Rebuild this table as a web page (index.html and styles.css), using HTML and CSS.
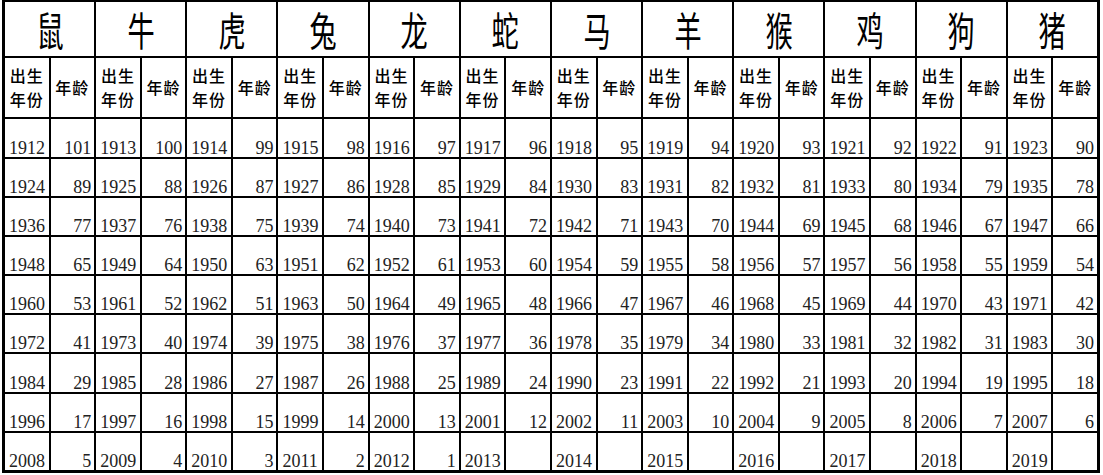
FILE: index.html
```html
<!DOCTYPE html>
<html lang="zh-CN">
<head>
<meta charset="utf-8">
<title>生肖年龄对照表</title>
<link rel="stylesheet" href="styles.css">
</head>
<body>
<div class="sheet">
  <div class="zh"><span>鼠</span></div><div class="zh"><span>牛</span></div><div class="zh"><span>虎</span></div><div class="zh"><span>兔</span></div><div class="zh"><span>龙</span></div><div class="zh"><span>蛇</span></div><div class="zh"><span>马</span></div><div class="zh"><span>羊</span></div><div class="zh"><span>猴</span></div><div class="zh"><span>鸡</span></div><div class="zh"><span>狗</span></div><div class="zh"><span>猪</span></div>

  <div class="sh">出生<br>年份</div><div class="sh">年龄</div><div class="sh">出生<br>年份</div><div class="sh">年龄</div><div class="sh">出生<br>年份</div><div class="sh">年龄</div><div class="sh">出生<br>年份</div><div class="sh">年龄</div><div class="sh">出生<br>年份</div><div class="sh">年龄</div><div class="sh">出生<br>年份</div><div class="sh">年龄</div><div class="sh">出生<br>年份</div><div class="sh">年龄</div><div class="sh">出生<br>年份</div><div class="sh">年龄</div><div class="sh">出生<br>年份</div><div class="sh">年龄</div><div class="sh">出生<br>年份</div><div class="sh">年龄</div><div class="sh">出生<br>年份</div><div class="sh">年龄</div><div class="sh">出生<br>年份</div><div class="sh">年龄</div>

  <div class="y">1912</div><div class="a">101</div><div class="y">1913</div><div class="a">100</div><div class="y">1914</div><div class="a">99</div><div class="y">1915</div><div class="a">98</div><div class="y">1916</div><div class="a">97</div><div class="y">1917</div><div class="a">96</div><div class="y">1918</div><div class="a">95</div><div class="y">1919</div><div class="a">94</div><div class="y">1920</div><div class="a">93</div><div class="y">1921</div><div class="a">92</div><div class="y">1922</div><div class="a">91</div><div class="y">1923</div><div class="a">90</div>

  <div class="y">1924</div><div class="a">89</div><div class="y">1925</div><div class="a">88</div><div class="y">1926</div><div class="a">87</div><div class="y">1927</div><div class="a">86</div><div class="y">1928</div><div class="a">85</div><div class="y">1929</div><div class="a">84</div><div class="y">1930</div><div class="a">83</div><div class="y">1931</div><div class="a">82</div><div class="y">1932</div><div class="a">81</div><div class="y">1933</div><div class="a">80</div><div class="y">1934</div><div class="a">79</div><div class="y">1935</div><div class="a">78</div>

  <div class="y">1936</div><div class="a">77</div><div class="y">1937</div><div class="a">76</div><div class="y">1938</div><div class="a">75</div><div class="y">1939</div><div class="a">74</div><div class="y">1940</div><div class="a">73</div><div class="y">1941</div><div class="a">72</div><div class="y">1942</div><div class="a">71</div><div class="y">1943</div><div class="a">70</div><div class="y">1944</div><div class="a">69</div><div class="y">1945</div><div class="a">68</div><div class="y">1946</div><div class="a">67</div><div class="y">1947</div><div class="a">66</div>

  <div class="y">1948</div><div class="a">65</div><div class="y">1949</div><div class="a">64</div><div class="y">1950</div><div class="a">63</div><div class="y">1951</div><div class="a">62</div><div class="y">1952</div><div class="a">61</div><div class="y">1953</div><div class="a">60</div><div class="y">1954</div><div class="a">59</div><div class="y">1955</div><div class="a">58</div><div class="y">1956</div><div class="a">57</div><div class="y">1957</div><div class="a">56</div><div class="y">1958</div><div class="a">55</div><div class="y">1959</div><div class="a">54</div>

  <div class="y">1960</div><div class="a">53</div><div class="y">1961</div><div class="a">52</div><div class="y">1962</div><div class="a">51</div><div class="y">1963</div><div class="a">50</div><div class="y">1964</div><div class="a">49</div><div class="y">1965</div><div class="a">48</div><div class="y">1966</div><div class="a">47</div><div class="y">1967</div><div class="a">46</div><div class="y">1968</div><div class="a">45</div><div class="y">1969</div><div class="a">44</div><div class="y">1970</div><div class="a">43</div><div class="y">1971</div><div class="a">42</div>

  <div class="y">1972</div><div class="a">41</div><div class="y">1973</div><div class="a">40</div><div class="y">1974</div><div class="a">39</div><div class="y">1975</div><div class="a">38</div><div class="y">1976</div><div class="a">37</div><div class="y">1977</div><div class="a">36</div><div class="y">1978</div><div class="a">35</div><div class="y">1979</div><div class="a">34</div><div class="y">1980</div><div class="a">33</div><div class="y">1981</div><div class="a">32</div><div class="y">1982</div><div class="a">31</div><div class="y">1983</div><div class="a">30</div>

  <div class="y">1984</div><div class="a">29</div><div class="y">1985</div><div class="a">28</div><div class="y">1986</div><div class="a">27</div><div class="y">1987</div><div class="a">26</div><div class="y">1988</div><div class="a">25</div><div class="y">1989</div><div class="a">24</div><div class="y">1990</div><div class="a">23</div><div class="y">1991</div><div class="a">22</div><div class="y">1992</div><div class="a">21</div><div class="y">1993</div><div class="a">20</div><div class="y">1994</div><div class="a">19</div><div class="y">1995</div><div class="a">18</div>

  <div class="y">1996</div><div class="a">17</div><div class="y">1997</div><div class="a">16</div><div class="y">1998</div><div class="a">15</div><div class="y">1999</div><div class="a">14</div><div class="y">2000</div><div class="a">13</div><div class="y">2001</div><div class="a">12</div><div class="y">2002</div><div class="a">11</div><div class="y">2003</div><div class="a">10</div><div class="y">2004</div><div class="a">9</div><div class="y">2005</div><div class="a">8</div><div class="y">2006</div><div class="a">7</div><div class="y">2007</div><div class="a">6</div>

  <div class="y">2008</div><div class="a">5</div><div class="y">2009</div><div class="a">4</div><div class="y">2010</div><div class="a">3</div><div class="y">2011</div><div class="a">2</div><div class="y">2012</div><div class="a">1</div><div class="y">2013</div><div class="a"></div><div class="y">2014</div><div class="a"></div><div class="y">2015</div><div class="a"></div><div class="y">2016</div><div class="a"></div><div class="y">2017</div><div class="a"></div><div class="y">2018</div><div class="a"></div><div class="y">2019</div><div class="a"></div>
</div>
</body>
</html>
```
FILE: styles.css
```css
html, body {
  margin: 0;
  padding: 0;
  background: #fff;
}

.sheet {
  margin-left: 2px;
  width: 1098px;
  box-sizing: border-box;
  display: grid;
  grid-template-columns: repeat(24, 1fr);
  grid-template-rows: 54px 59px 38px repeat(8, 37.1px);
  gap: 2px;
  background: #000;
  border: 3px solid #000;
  border-top-width: 2px;
  color: #222;
}

.sheet > div {
  background: #fff;
  min-width: 0;
}

.zh {
  grid-column: span 2;
  display: flex;
  align-items: center;
  justify-content: center;
  font-family: "Noto Sans CJK SC", sans-serif;
  font-size: 40px;
  line-height: 54px;
  color: #000;
}

.zh span {
  display: inline-block;
  transform: scaleX(0.68);
}

.sh {
  display: flex;
  align-items: center;
  justify-content: center;
  text-align: center;
  font-family: "Noto Sans CJK SC", sans-serif;
  font-size: 16px;
  line-height: 23.5px;
  letter-spacing: 1px;
  font-weight: 500;
  color: #000;
}

.y, .a {
  display: flex;
  align-items: flex-end;
  font-family: "Liberation Serif", serif;
  font-size: 18px;
  line-height: 18px;
}

.y {
  justify-content: flex-start;
  padding-left: 4px;
}

.a {
  justify-content: flex-end;
  padding-right: 3px;
}
```
